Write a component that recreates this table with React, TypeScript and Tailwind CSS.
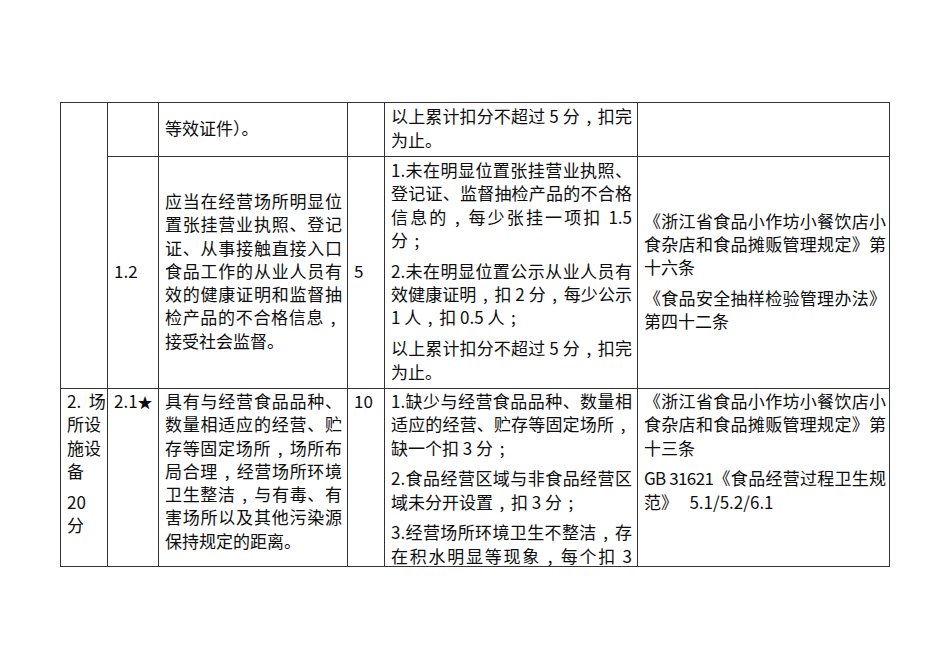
import React from "react";

function fmt(s: string): React.ReactNode[] {
  return s.split(/([，；])/).map((part, i) => {
    if (part === "，")
      return (
        <span key={i} className="px-[6.6px]">
          ,
        </span>
      );
    if (part === "；")
      return (
        <span key={i} className="px-[6.6px]">
          ;
        </span>
      );
    return <React.Fragment key={i}>{part}</React.Fragment>;
  });
}

function P({ text, spread }: { text: string; spread?: boolean }) {
  return (
    <p className={spread ? "text-justify [text-align-last:justify]" : "text-justify"}>
      {fmt(text)}
    </p>
  );
}

type CellProps = {
  children?: React.ReactNode;
  top?: boolean;
  pad?: string;
  span?: boolean;
};

function Cell({ children, top, pad, span }: CellProps) {
  const align = top ? "justify-start pt-0" : "justify-center pt-px pb-[5px]";
  const padding = pad ?? "pl-[6px] pr-[5px]";
  const rows = span ? "row-span-2" : "";
  return (
    <div
      className={`${rows} ${align} ${padding} flex min-h-0 flex-col gap-[7.5px] overflow-hidden border-b border-r border-[#333]`}
    >
      {children}
    </div>
  );
}

export default function App() {
  return (
    <div className="h-[672px] w-[950px] overflow-hidden bg-white pl-[60px] pt-[102px] font-['Noto_Sans_CJK_SC',sans-serif] text-[17px] leading-[23.3px] text-[#0d0d0d]">
      <div className="grid w-[830px] grid-cols-[47px_51px_189px_37px_253px_252px] grid-rows-[54px_232px_178px] border-l border-t border-[#333]">
        {/* Column 1, rows 1-2 merged */}
        <Cell span />

        {/* Row 1 */}
        <Cell />
        <Cell>
          <P text="等效证件）。" />
        </Cell>
        <Cell />
        <Cell>
          <P text="以上累计扣分不超过 5 分，扣完为止。" />
        </Cell>
        <Cell pad="pl-[6px] pr-[3px]" />

        {/* Row 2 */}
        <Cell>
          <p>1.2</p>
        </Cell>
        <Cell>
          <P text="应当在经营场所明显位置张挂营业执照、登记证、从事接触直接入口食品工作的从业人员有效的健康证明和监督抽检产品的不合格信息，接受社会监督。" />
        </Cell>
        <Cell>
          <p>5</p>
        </Cell>
        <Cell>
          <P text="1.未在明显位置张挂营业执照、登记证、监督抽检产品的不合格信息的，每少张挂一项扣 1.5 分；" />
          <P text="2.未在明显位置公示从业人员有效健康证明，扣 2 分，每少公示 1 人，扣 0.5 人；" />
          <P text="以上累计扣分不超过 5 分，扣完为止。" />
        </Cell>
        <Cell pad="pl-[6px] pr-[3px]">
          <P text="《浙江省食品小作坊小餐饮店小食杂店和食品摊贩管理规定》第十六条" />
          <P text="《食品安全抽样检验管理办法》第四十二条" />
        </Cell>

        {/* Row 3 (continues on next page) */}
        <Cell top pad="pl-[6px] pr-[1px]">
          <p>{"2.\u00a0\u00a0场所设施设备"}</p>
          <p>
            20
            <br />分
          </p>
        </Cell>
        <Cell top>
          <p>
            2.1<span className="text-[15px]">★</span>
          </p>
        </Cell>
        <Cell top>
          <P text="具有与经营食品品种、数量相适应的经营、贮存等固定场所，场所布局合理，经营场所环境卫生整洁，与有毒、有害场所以及其他污染源保持规定的距离。" />
        </Cell>
        <Cell top>
          <p>10</p>
        </Cell>
        <Cell top>
          <P text="1.缺少与经营食品品种、数量相适应的经营、贮存等固定场所，缺一个扣 3 分；" />
          <P text="2.食品经营区域与非食品经营区域未分开设置，扣 3 分；" />
          <P spread text="3.经营场所环境卫生不整洁，存在积水明显等现象，每个扣 3" />
        </Cell>
        <Cell top pad="pl-[6px] pr-[3px]">
          <P text="《浙江省食品小作坊小餐饮店小食杂店和食品摊贩管理规定》第十三条" />
          <p className="text-justify">
            <span className="tracking-[-0.6px]">GB 31621</span>
            {"《食品经营过程卫生规范》\u00a0\u00a0\u00a05.1/5.2/6.1"}
          </p>
        </Cell>
      </div>
    </div>
  );
}
